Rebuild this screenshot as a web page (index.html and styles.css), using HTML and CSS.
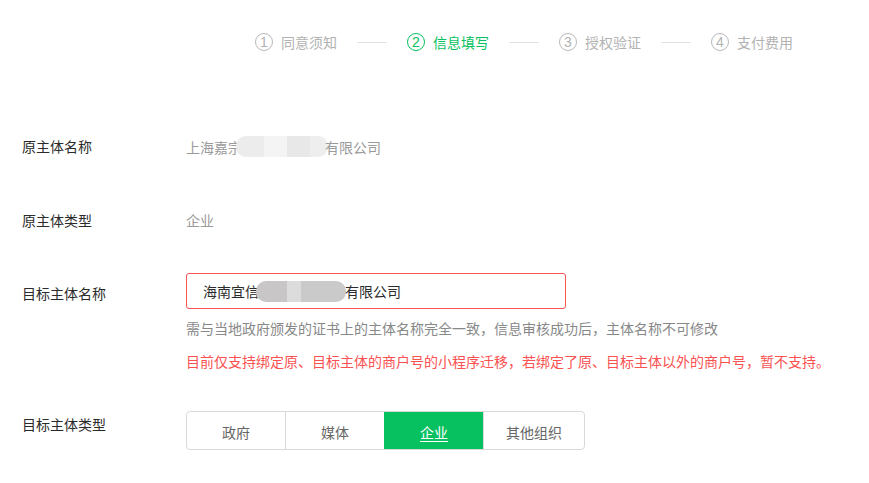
FILE: index.html
```html
<!DOCTYPE html>
<html lang="zh-CN">
<head>
<meta charset="utf-8">
<title>信息填写</title>
<link rel="stylesheet" href="styles.css">
</head>
<body>
<div class="page">
  <div class="steps">
    <div class="step"><span class="num">1</span><span class="name">同意须知</span></div>
    <span class="sep"></span>
    <div class="step active"><span class="num">2</span><span class="name">信息填写</span></div>
    <span class="sep"></span>
    <div class="step"><span class="num">3</span><span class="name">授权验证</span></div>
    <span class="sep"></span>
    <div class="step"><span class="num">4</span><span class="name">支付费用</span></div>
  </div>

  <div class="form">
    <div class="row row-1">
      <div class="label">原主体名称</div>
      <div class="value">上海嘉宗<span class="blur blur-light"></span>有限公司</div>
    </div>
    <div class="row row-2">
      <div class="label">原主体类型</div>
      <div class="value">企业</div>
    </div>
    <div class="row row-3">
      <div class="label label-input">目标主体名称</div>
      <div class="field">
        <div class="input">海南宜信<span class="blur blur-dark"></span>有限公司</div>
        <div class="hint">需与当地政府颁发的证书上的主体名称完全一致，信息审核成功后，主体名称不可修改</div>
        <div class="warn">目前仅支持绑定原、目标主体的商户号的小程序迁移，若绑定了原、目标主体以外的商户号，暂不支持。</div>
      </div>
    </div>
    <div class="row row-4">
      <div class="label label-seg">目标主体类型</div>
      <div class="seg">
        <span class="seg-item">政府</span>
        <span class="seg-item">媒体</span>
        <span class="seg-item on">企业</span>
        <span class="seg-item">其他组织</span>
      </div>
    </div>
  </div>
</div>
</body>
</html>
```

FILE: styles.css
```css
* { box-sizing: border-box; }
html, body { margin: 0; padding: 0; background: #fff; }
body {
  font-family: "Microsoft YaHei", "Noto Sans CJK SC", "Noto Sans", sans-serif;
  font-size: 14px;
  line-height: 20px;
  color: #353535;
}
.page { width: 869px; height: 483px; overflow: hidden; }

.steps {
  display: flex;
  align-items: center;
  padding: 32px 0 0 255px;
  height: 52px;
}
.step { display: flex; align-items: center; color: #b2b2b2; }
.step .num {
  width: 18px; height: 18px;
  border: 1px solid #b8b8b8;
  border-radius: 50%;
  display: flex; align-items: center; justify-content: center;
  font-size: 14px; line-height: 16px;
  margin-right: 8px;
  font-family: "Liberation Sans", "Noto Sans", sans-serif;
}
.step .name { width: 56px; white-space: nowrap; }
.step.active { color: #07c160; }
.step.active .num { border-color: #07c160; }
.sep { width: 30px; height: 1px; background: #e2e2e2; margin: 0 20px; }

.form { padding-left: 22px; margin-top: 84px; }
.row { display: flex; align-items: flex-start; }
.label { width: 164px; flex: none; color: #2b2b2b; }
.value { color: #9a9a9a; display: flex; align-items: center; white-space: nowrap; }
.row-2 { margin-top: 53px; }
.row-3 { margin-top: 43px; }
.row-4 { margin-top: 40px; }
.label-input { margin-top: 10px; }
.label-seg { margin-top: 3px; }

.blur {
  display: inline-block;
  height: 21px;
  border-radius: 10px;
  vertical-align: middle;
}
.blur-light {
  width: 92px;
  margin-left: -6px;
  margin-right: -3px;
  background: linear-gradient(90deg, #ececec 0 30%, #f4f4f4 30% 55%, #e8e8e8 55% 80%, #eeeeee 80% 100%);
}
.blur-dark {
  width: 90px;
  margin-left: -3px;
  margin-right: -1px;
  background: linear-gradient(90deg, #c8c6c6 0 35%, #dcdcdc 35% 50%, #cacaca 50% 100%);
}

.field { width: 380px; }
.input {
  width: 380px; height: 36px;
  border: 1px solid #fa5151;
  border-radius: 3px;
  padding-left: 16px;
  display: flex; align-items: center;
  color: #2b2b2b;
  white-space: nowrap;
}
.hint { color: #888; margin-top: 9px; white-space: nowrap; }
.warn { color: #fa5151; margin-top: 13px; white-space: nowrap; }

.seg {
  display: flex;
  border: 1px solid #d9d9d9;
  border-radius: 4px;
  overflow: hidden;
  height: 39px;
}
.seg-item {
  width: 99px;
  display: flex; align-items: center; justify-content: center;
  padding-top: 3px;
  color: #666;
  border-left: 1px solid #d9d9d9;
}
.seg-item:first-child { border-left: none; width: 98px; }
.seg-item:last-child { width: 101px; }
.seg-item.on {
  background: #07c160;
  color: #fff;
  border-left-color: #07c160;
  text-decoration: underline;
  text-underline-offset: 3px;
}
.seg-item.on + .seg-item { border-left-color: #d9d9d9; }
```
